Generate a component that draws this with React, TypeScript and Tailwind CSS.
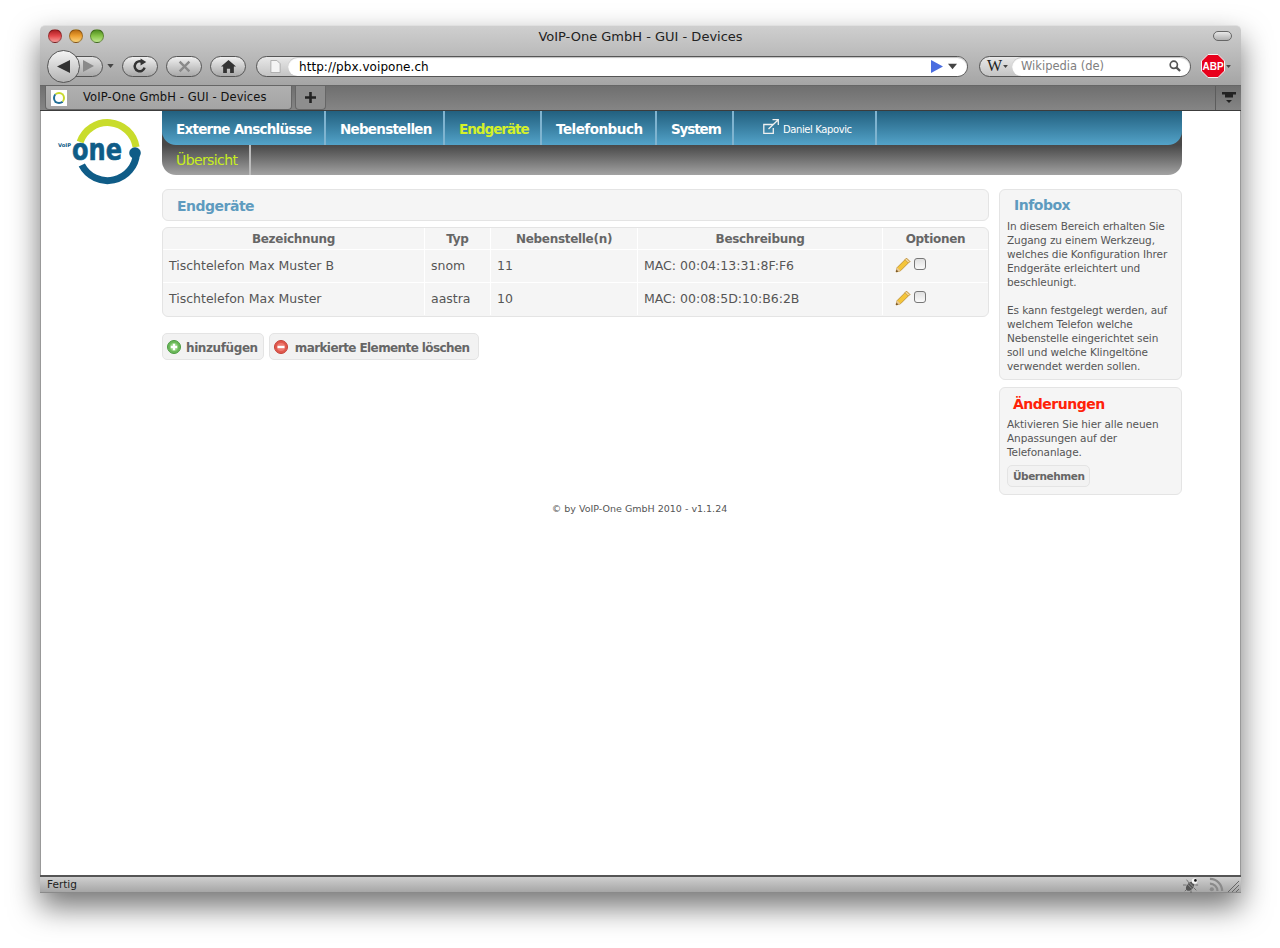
const Traffic = ({ color }: { color: string }) => (
  <div className={`w-[14px] h-[14px] rounded-full border border-[#00000050] ${color}`} />
);

const Pill = ({ children }: { children: React.ReactNode }) => (
  <div className="w-[36px] h-[21px] rounded-full border border-[#555] bg-gradient-to-b from-[#f0f0f0] to-[#a9a9a9] flex items-center justify-center">
    {children}
  </div>
);

const Caret = ({ className }: { className: string }) => (
  <svg viewBox="0 0 8 5" className={className}>
    <path d="M0 0h8L4 5z" fill="#444" />
  </svg>
);

const Toolbar = () => (
  <div className="h-[60px] bg-gradient-to-b from-[#cfcfcf] to-[#a5a5a5] rounded-t-[5px] border-t border-[#e0e0e0]">
    {/* title */}
    <div className="h-[21px] relative flex items-center justify-center text-[13px] text-[#222] pt-[1px]">
      <div className="absolute left-[8px] top-[3px] flex gap-[7px]">
        <Traffic color="bg-gradient-to-b from-[#a81c20] via-[#e5484c] to-[#f49a9a]" />
        <Traffic color="bg-gradient-to-b from-[#b86a10] via-[#eda030] to-[#f8d37a]" />
        <Traffic color="bg-gradient-to-b from-[#4e8c1e] via-[#88c448] to-[#c0e890]" />
      </div>
      VoIP-One GmbH - GUI - Devices
      <div className="absolute right-[9px] top-[5px] w-[19px] h-[10px] rounded-full border border-[#666] bg-gradient-to-b from-[#e8e8e8] to-[#b0b0b0]" />
    </div>

    <div className="h-[38px] flex items-center pl-[7px] pr-[9px]">
      {/* back and forward */}
      <div className="w-[58px] h-[33px] relative shrink-0">
        <div className="absolute left-[20px] top-[6px] w-[36px] h-[21px] rounded-r-full border border-[#555] bg-gradient-to-b from-[#e4e4e4] to-[#a9a9a9] flex items-center justify-end pr-[8px]">
          <svg viewBox="0 0 12 12" className="w-[12px] h-[12px]"><path d="M1 0l11 6-11 6z" fill="#8a8a8a" /></svg>
        </div>
        <div className="absolute left-0 top-0 w-[33px] h-[33px] rounded-full border border-[#555] bg-gradient-to-b from-[#f4f4f4] to-[#b4b4b4] flex items-center justify-center">
          <svg viewBox="0 0 13 13" className="w-[13px] h-[13px] mr-[1px]"><path d="M13 0L0 6.500 13 13z" fill="#333" /></svg>
        </div>
      </div>
      <Caret className="w-[7px] h-[4px] ml-[2px] mr-[8px] shrink-0" />
      <div className="flex gap-[8px] shrink-0">
        <Pill>
          <svg viewBox="0 0 14 14" className="w-[16px] h-[16px]" fill="none">
            <path d="M11 8.500A4.400 4.400 0 1 1 9.300 3.600" stroke="#333" strokeWidth="2.200" />
            <path d="M7.500 0.500l5 3-5 3z" fill="#333" />
          </svg>
        </Pill>
        <Pill>
          <svg viewBox="0 0 12 12" className="w-[13px] h-[13px]" fill="none">
            <path d="M1.500 1.500l9 9M10.500 1.500l-9 9" stroke="#8a8a8a" strokeWidth="2.200" />
          </svg>
        </Pill>
        <Pill>
          <svg viewBox="0 0 14 12" className="w-[15px] h-[13px]">
            <path d="M7 0L0 6h2v6h3.500V8h3v4H12V6h2z" fill="#333" />
          </svg>
        </Pill>
      </div>

      {/* url bar */}
      <div className="ml-[10px] w-[712px] h-[21px] shrink-0 rounded-full border border-[#555] bg-gradient-to-b from-[#e8e8e8] to-[#c4c4c4] flex">
        <div className="w-[31px] flex items-center justify-center pl-[6px]">
          <svg viewBox="0 0 11 14" className="w-[11px] h-[13px]">
            <path d="M0.500 0.500h6.500l3.500 3.500v9.500H.5z" fill="#f4f4f4" stroke="#aaa" />
          </svg>
        </div>
        <div className="flex-1 bg-white rounded-full flex items-center pl-[11px] pr-[10px] text-[12px] text-black shadow-[inset_0_1px_1px_rgba(0,0,0,0.25)]">
          <span className="pt-[1px] tracking-[0.05px]">http://pbx.voipone.ch</span>
          <svg viewBox="0 0 12 13" className="w-[12px] h-[13px] ml-auto"><path d="M0 0l12 6.500L0 13z" fill="#4a6de0" /></svg>
          <Caret className="w-[9px] h-[7px] ml-[5px]" />
        </div>
      </div>

      {/* search */}
      <div className="ml-[11px] w-[212px] h-[21px] shrink-0 rounded-full border border-[#555] bg-gradient-to-b from-[#e8e8e8] to-[#c4c4c4] flex">
        <div className="w-[32px] flex items-center pl-[7px] gap-[1px] font-['Liberation_Serif',serif] text-[16px] text-[#222] leading-none">
          W
          <Caret className="w-[5px] h-[3px]" />
        </div>
        <div className="flex-1 bg-white rounded-full flex items-center pl-[9px] pr-[9px] text-[11.500px] text-[#808080] shadow-[inset_0_1px_1px_rgba(0,0,0,0.25)]">
          <span className="pt-[2px]">Wikipedia (de)</span>
          <svg viewBox="0 0 13 13" className="w-[12px] h-[12px] ml-auto" fill="none">
            <circle cx="5.200" cy="5.200" r="3.900" stroke="#555" strokeWidth="1.800" />
            <path d="M8 8l4 4" stroke="#555" strokeWidth="2.400" />
          </svg>
        </div>
      </div>

      {/* adblock */}
      <svg viewBox="0 0 24 24" className="w-[24px] h-[24px] ml-[10px] shrink-0">
        <path d="M7 .5h10L23.500 7v10L17 23.500H7L.5 17V7z" fill="#e8001c" stroke="#f4f4f4" />
        <text x="12" y="16" textAnchor="middle" fontSize="10" fontWeight="700" fill="#fff" fontFamily="Liberation Sans, sans-serif">ABP</text>
      </svg>
      <Caret className="w-[5px] h-[3px] ml-[1px] shrink-0" />
    </div>
  </div>
);

const TabBar = () => (
  <div className="h-[26px] flex bg-gradient-to-b from-[#6f6f6f] to-[#858585] border-t border-[#666] border-b border-b-[#3c3c3c] pl-[5px]">
    <div className="w-[247px] h-[24px] rounded-b-[4px] bg-gradient-to-b from-[#b0b0b0] to-[#a4a4a4] border border-t-0 border-[#666] flex items-center pl-[5px] shrink-0">
      <div className="w-[16px] h-[16px] bg-white flex items-center justify-center shrink-0">
        <div className="w-[12px] h-[12px] rounded-full border-2 border-t-[#c8d92c] border-r-[#c8d92c] border-b-[#1f6c95] border-l-[#1f6c95]" />
      </div>
      <span className="ml-[16px] text-[11.500px] tracking-[0.1px] text-[#111] whitespace-nowrap">VoIP-One GmbH - GUI - Devices</span>
    </div>
    <div className="ml-[3px] w-[31px] h-[24px] rounded-b-[4px] bg-[#8e8e8e] border border-t-0 border-[#666] flex items-center justify-center shrink-0">
      <svg viewBox="0 0 11 11" className="w-[11px] h-[11px]"><path d="M4.200 0h2.600v4.200H11v2.600H6.800V11H4.200V6.800H0V4.200h4.200z" fill="#222" /></svg>
    </div>
    <div className="ml-auto w-[26px] border-l border-[#5c5c5c] flex flex-col items-center pt-[6px]">
      <svg viewBox="0 0 14 11" className="w-[14px] h-[11px]">
        <path d="M0 0h14v2.500h-3v3H3v-3H0z" fill="#222" />
        <path d="M4 8h6l-3 3z" fill="#222" />
      </svg>
    </div>
  </div>
);

const Logo = () => (
  <svg viewBox="0 0 122 80" className="w-[122px] h-[80px] shrink-0">
    <path d="M39.100 26A29 29 0 0 1 95.100 31" fill="none" stroke="#c9dc2c" strokeWidth="7" />
    <path d="M40.800 49A29 29 0 0 0 95.500 37" fill="none" stroke="#0f5c87" strokeWidth="7" />
    <circle cx="94" cy="37" r="5.800" fill="#0f5c87" />
    <text x="31" y="44" fontSize="30" fontWeight="700" fill="#0f5c87" stroke="#0f5c87" strokeWidth=".6" textLength="50" lengthAdjust="spacingAndGlyphs" fontFamily="DejaVu Sans, sans-serif">one</text>
    <text x="17" y="30.500" fontSize="5.200" fontWeight="700" fill="#0f5c87" fontFamily="DejaVu Sans, sans-serif">VoIP</text>
  </svg>
);

const NavItem = ({ label, className }: { label: string; className: string }) => (
  <div className={`h-full pl-[14px] pt-[2px] flex items-center border-r-2 border-[#7fb4d0] text-[13.500px] font-bold whitespace-nowrap ${className}`}>
    {label}
  </div>
);

const Nav = () => (
  <div className="h-[64px] rounded-b-[14px] bg-gradient-to-b from-[#484848] from-[53%] to-[#a3a3a3]">
    <div className="h-[34px] rounded-b-[14px] bg-gradient-to-b from-[#22607f] to-[#53a3c9] flex">
      <NavItem label="Externe Anschlüsse" className="w-[164px] text-white tracking-[-0.75px]" />
      <NavItem label="Nebenstellen" className="w-[119px] text-white tracking-[-0.75px]" />
      <NavItem label="Endgeräte" className="w-[97px] text-[#d4f02a] tracking-[-1px]" />
      <NavItem label="Telefonbuch" className="w-[115px] text-white tracking-[-0.5px]" />
      <NavItem label="System" className="w-[77px] text-white tracking-[-1.1px]" />
      <div className="h-full w-[143px] pl-[29px] flex items-center border-r-2 border-[#7fb4d0] text-[10px] text-white whitespace-nowrap tracking-[-0.4px]">
        <svg viewBox="0 0 16 15" className="w-[16px] h-[15px] mr-[4px] mb-[4px] shrink-0" fill="none">
          <path d="M10 5.500H.8v9h9.500V9" stroke="#f0f0f0" strokeWidth="1.300" />
          <path d="M5.500 10L15 1M9.500 .7H15.300V6" stroke="#f0f0f0" strokeWidth="1.300" />
        </svg>
        <span className="mt-[2px]">Daniel Kapovic</span>
      </div>
    </div>
    <div className="h-[30px] flex">
      <div className="h-full pl-[14px] pr-[12px] flex items-center border-r-2 border-[#bdbdbd] text-[14px] text-[#c8ee1e] tracking-[-0.6px]">Übersicht</div>
    </div>
  </div>
);

const Pencil = () => (
  <svg viewBox="0 0 16 16" className="w-[16px] h-[16px] shrink-0">
    <path d="M1 15l1.200-4.500L11.500 1.200l3.300 3.300L5.500 13.800z" fill="#f4c53a" stroke="#b8862a" strokeWidth=".8" />
    <path d="M11.500 1.200l3.300 3.300-1.500 1.500-3.300-3.300z" fill="#f3d9a0" stroke="#b8862a" strokeWidth=".6" />
    <path d="M1 15l1.200-4.500 3.300 3.300z" fill="#e8c894" />
    <path d="M1 15l.6-2.200 1.600 1.600z" fill="#5a3a12" />
  </svg>
);

const Checkbox = () => (
  <div className="w-[12px] h-[12px] mb-[2px] rounded-[3px] border border-[#777] bg-gradient-to-b from-[#e0e0e0] to-[#fafafa] shrink-0" />
);

const Table = () => {
  const cols = "grid grid-cols-[262px_66px_147px_245px_105px]";
  const rows = [
    ["Tischtelefon Max Muster B", "snom", "11", "MAC: 00:04:13:31:8F:F6"],
    ["Tischtelefon Max Muster", "aastra", "10", "MAC: 00:08:5D:10:B6:2B"],
  ];
  return (
    <div className="mt-[6px] h-[90px] rounded-[6px] border border-[#e4e4e4] bg-[#f5f5f5] overflow-hidden">
      <div className={`${cols} h-[22px] border-b border-white text-[12px] font-bold text-[#666] tracking-[-0.3px]`}>
        {["Bezeichnung", "Typ", "Nebenstelle(n)", "Beschreibung", "Optionen"].map((h, i) => (
          <div key={h} className={`flex items-center justify-center ${i < 4 ? "border-r border-white" : ""}`}>{h}</div>
        ))}
      </div>
      {rows.map((r, idx) => (
        <div key={r[0]} className={`${cols} text-[12.500px] text-[#555] ${idx === 0 ? "h-[33px] border-b border-white" : "h-[32px]"}`}>
          {r.map((c) => (
            <div key={c} className="flex items-center pl-[6px] border-r border-white whitespace-nowrap">{c}</div>
          ))}
          <div className="flex items-center pl-[12px] gap-[3px] pb-[3px]">
            <Pencil />
            <Checkbox />
          </div>
        </div>
      ))}
    </div>
  );
};

const Button = ({ children }: { children: React.ReactNode }) => (
  <div className="h-[27px] pl-[4px] pr-[5px] rounded-[5px] border border-[#e4e4e4] bg-[#f2f2f2] flex items-center text-[12px] font-bold text-[#666] whitespace-nowrap">
    {children}
  </div>
);

const RoundIcon = ({ plus }: { plus?: boolean }) => (
  <svg viewBox="0 0 14 14" className="w-[14px] h-[14px] shrink-0">
    <circle cx="7" cy="7" r="6.500" fill={plus ? "#6cb85a" : "#e0594e"} stroke={plus ? "#4a9a40" : "#c44238"} />
    <circle cx="7" cy="7" r="4" fill={plus ? "#8ed07c" : "#ee7a70"} />
    {plus ? <path d="M5.800 3.800h2.400v2h2v2.400h-2v2H5.800v-2h-2V5.800h2z" fill="#fff" /> : <rect x="3.500" y="5.800" width="7" height="2.400" fill="#fff" />}
  </svg>
);

const SideBox = ({ className, children }: { className: string; children: React.ReactNode }) => (
  <div className={`rounded-[6px] border border-[#e4e4e4] bg-[#f5f5f5] px-[7px] text-[10.500px] leading-[14px] text-[#555] tracking-[-0.1px] ${className}`}>
    {children}
  </div>
);

export default function App() {
  return (
    <div className="w-[1280px] h-[948px] overflow-hidden bg-white pl-[40px] pt-[25px] font-['DejaVu_Sans',sans-serif]">
      <div className="w-[1201px] h-[868px] flex flex-col rounded-t-[5px] shadow-[0_14px_30px_rgba(0,0,0,0.55)] bg-white">
        <Toolbar />
        <TabBar />

        <div className="flex-1 flex bg-white pr-[58px] border-x border-[#999]">
          <div className="w-[121px] pt-[5px] shrink-0">
            <Logo />
          </div>
          <div className="flex-1">
            <Nav />
            <div className="flex gap-[10px] mt-[14px]">
              {/* main column */}
              <div className="w-[827px] shrink-0">
                <div className="h-[32px] rounded-[6px] border border-[#e4e4e4] bg-[#f5f5f5] flex items-center pl-[14px] pt-[3px] text-[14px] font-bold text-[#5e9bbf] tracking-[-0.5px]">
                  Endgeräte
                </div>
                <Table />
                <div className="flex gap-[5px] mt-[16px]">
                  <Button><RoundIcon plus /><span className="ml-[5px] pt-[2px] tracking-[-0.4px]">hinzufügen</span></Button>
                  <Button><RoundIcon /><span className="ml-[7px] mr-[4px] pt-[2px] tracking-[-0.6px]">markierte Elemente löschen</span></Button>
                </div>
              </div>

              {/* sidebar */}
              <div className="w-[183px] shrink-0 flex flex-col gap-[7px]">
                <SideBox className="h-[191px]">
                  <div className="text-[14px] font-bold text-[#5e9bbf] tracking-[-0.5px] pl-[7px] pt-[6px] pb-[5px] leading-[18px]">Infobox</div>
                  <p>In diesem Bereich erhalten Sie<br />Zugang zu einem Werkzeug,<br />welches die Konfiguration Ihrer<br />Endgeräte erleichtert und<br />beschleunigt.</p>
                  <p className="mt-[14px]">Es kann festgelegt werden, auf<br />welchem Telefon welche<br />Nebenstelle eingerichtet sein<br />soll und welche Klingeltöne<br />verwendet werden sollen.</p>
                </SideBox>
                <SideBox className="h-[108px]">
                  <div className="text-[14px] font-bold text-[#ff2208] tracking-[-0.5px] pl-[6px] pt-[7px] pb-[4px] leading-[18px]">Änderungen</div>
                  <p>Aktivieren Sie hier alle neuen<br />Anpassungen auf der<br />Telefonanlage.</p>
                  <div className="mt-[6px] w-fit h-[22px] px-[5px] rounded-[5px] border border-[#e4e4e4] bg-[#f2f2f2] flex items-center text-[10.500px] font-bold text-[#666] tracking-[-0.45px]">Übernehmen</div>
                </SideBox>
              </div>
            </div>
            <div className="mt-[7px] text-center text-[9.500px] text-[#555] pr-[65px]">© by VoIP-One GmbH 2010 - v1.1.24</div>
          </div>
        </div>

        {/* status bar */}
        <div className="h-[18px] border-t-2 border-[#555] border-b border-b-[#8a8a8a] bg-gradient-to-b from-[#cfcfcf] to-[#a6a6a6] flex items-center pl-[7px] pr-[2px] text-[10.500px] text-[#222]">
          Fertig
          <svg viewBox="0 0 18 18" className="w-[18px] h-[16px] ml-auto">
            <ellipse cx="8" cy="10.500" rx="3.800" ry="5.800" transform="rotate(40 8 10.500)" fill="#555" />
            <path d="M5 8l5 5M7 6.500l5 5" stroke="#bbb" strokeWidth=".7" />
            <circle cx="13" cy="4.500" r="3.200" fill="#f4f4f4" />
            <circle cx="14" cy="3.800" r="1.500" fill="#111" />
            <path d="M4 3l3 4M0 9h4M2 16l3-3M9 18l0-3M15 15l-3-3M17 9l-3 0" stroke="#555" strokeWidth=".8" />
          </svg>
          <svg viewBox="0 0 16 16" className="w-[15px] h-[15px] ml-[9px]" fill="none">
            <circle cx="3" cy="13" r="2.200" fill="#8a8a8a" />
            <path d="M1 7a8 8 0 0 1 8 8M1 2a13 13 0 0 1 13 13" stroke="#8a8a8a" strokeWidth="2.400" />
          </svg>
          <svg viewBox="0 0 12 12" className="w-[12px] h-[12px] ml-[3px] self-end" fill="none">
            <path d="M1 12L12 1M5 12l7-7M9 12l3-3" stroke="#666" />
          </svg>
        </div>
      </div>
    </div>
  );
}
